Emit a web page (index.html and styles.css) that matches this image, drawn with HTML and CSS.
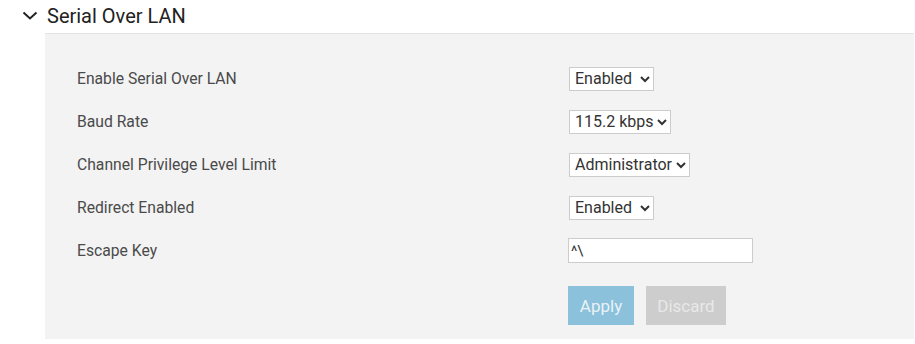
FILE: index.html
```html
<!DOCTYPE html>
<html lang="en">
<head>
    <meta charset="UTF-8">
    <meta name="viewport" content="width=device-width, initial-scale=1.0">
    <title>Serial Over LAN</title>
    <link rel="stylesheet" href="styles.css">
</head>
<body>
    <div class="section">
        <div class="section-header">
            <svg class="chevron" width="16" height="9" viewBox="0 0 16 9">
                <path d="M1.5 1.5 L8 7.5 L14.5 1.5" fill="none" stroke="#222" stroke-width="2"/>
            </svg>
            <h2>Serial Over LAN</h2>
        </div>
        <form class="panel" id="sol-form">
            <div class="form-row">
                <label for="sol-enable">Enable Serial Over LAN</label>
                <select id="sol-enable" name="enable">
                    <option selected>Enabled</option>
                    <option>Disabled</option>
                </select>
            </div>
            <div class="form-row">
                <label for="sol-baud">Baud Rate</label>
                <select id="sol-baud" name="baud">
                    <option>9.6 kbps</option>
                    <option>19.2 kbps</option>
                    <option>38.4 kbps</option>
                    <option>57.6 kbps</option>
                    <option selected>115.2 kbps</option>
                </select>
            </div>
            <div class="form-row">
                <label for="sol-priv">Channel Privilege Level Limit</label>
                <select id="sol-priv" name="privilege">
                    <option>User</option>
                    <option>Operator</option>
                    <option selected>Administrator</option>
                </select>
            </div>
            <div class="form-row">
                <label for="sol-redirect">Redirect Enabled</label>
                <select id="sol-redirect" name="redirect">
                    <option selected>Enabled</option>
                    <option>Disabled</option>
                </select>
            </div>
            <div class="form-row">
                <label for="sol-escape">Escape Key</label>
                <input type="text" id="sol-escape" name="escape" value="^\">
            </div>
            <div class="actions">
                <button type="submit" class="btn btn-apply" disabled>Apply</button>
                <button type="button" class="btn btn-discard" disabled>Discard</button>
            </div>
        </form>
    </div>
</body>
</html>
```

FILE: styles.css
```css
body {
    font-family: Roboto, "Liberation Sans", Arial, sans-serif;
    background-color: #fff;
    margin: 0;
    color: #444;
}
.section-header {
    display: flex;
    align-items: center;
    height: 33px;
    padding-left: 22px;
}
.chevron {
    margin-right: 9px;
    margin-top: -2px;
}
.section-header h2 {
    margin: 0;
    font-size: 20px;
    font-weight: 400;
    color: #222;
    margin-top: -2px;
}
.panel {
    margin-left: 45px;
    margin-right: 1px;
    background-color: #f3f3f3;
    border-top: 1px solid #e4e4e4;
    padding: 23px 0 14px 32px;
}
.form-row {
    display: flex;
    align-items: center;
    height: 43px;
}
.form-row label {
    width: 492px;
    font-size: 15.7px;
    color: #4a4a4a;
}
.form-row select {
    font-family: Roboto, "Liberation Sans", Arial, sans-serif;
    font-size: 16px;
    color: #333;
    height: 24px;
    background-color: #fff;
    border: 1px solid #ccc;
    border-radius: 0;
    padding: 0 0 0 1px;
}
.form-row input {
    font-family: Roboto, "Liberation Sans", Arial, sans-serif;
    font-size: 15px;
    color: #333;
    width: 185px;
    height: 25px;
    box-sizing: border-box;
    border: 1px solid #ccc;
    padding: 0 2px;
    margin-left: -1px;
}
.actions {
    display: flex;
    gap: 12px;
    margin-top: 14px;
    padding-left: 491px;
}
.btn {
    height: 39px;
    border: none;
    font-family: Roboto, "Liberation Sans", Arial, sans-serif;
    font-size: 17px;
    padding: 0 8px;
    color: #e9f2f7;
}
.btn-apply {
    width: 66px;
    background-color: #8bc1da;
}
.btn-discard {
    width: 80px;
    background-color: #cdcdcd;
    color: #e8e8e8;
}
```
